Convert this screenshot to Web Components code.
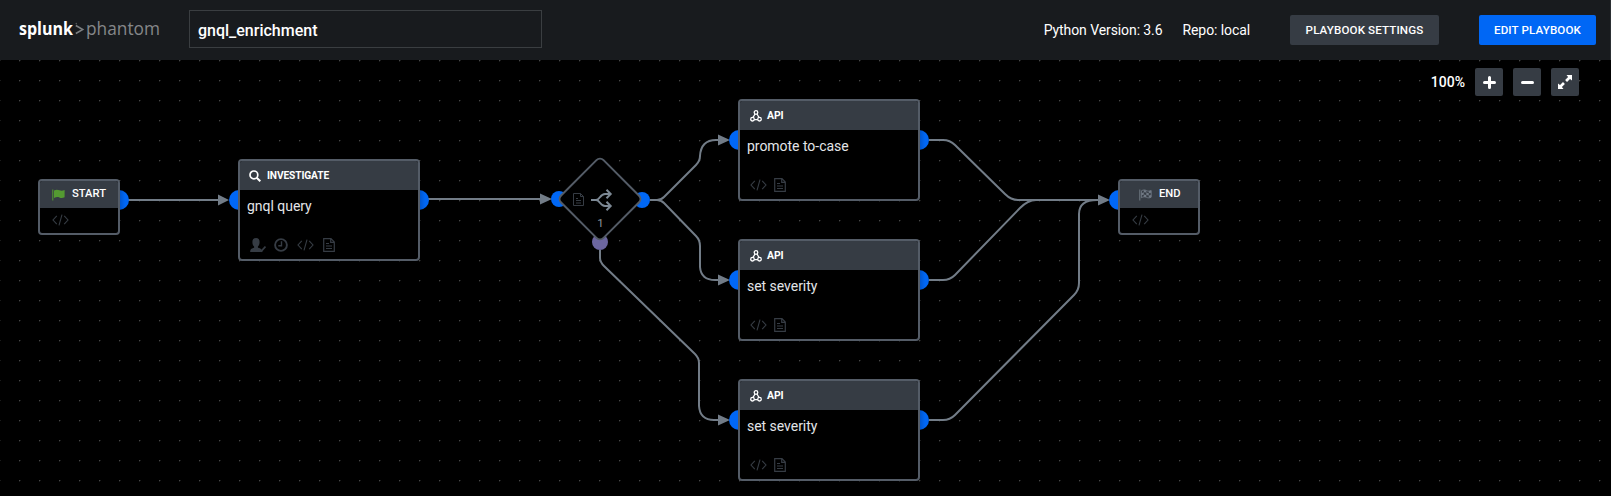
<!DOCTYPE html>
<html lang="en"><head><meta charset="utf-8"><title>gnql_enrichment</title>
<style>html,body{margin:0;background:#000}</style></head><body>
<playbook-app></playbook-app>
<script>
const define=(name,html)=>customElements.define(name,class extends HTMLElement{
  constructor(){super();const t=document.createElement('template');
    t.innerHTML=typeof html==='function'?html(this):html;
    this.attachShadow({mode:'open'}).append(t.content.cloneNode(true));}
});
const ICONS={
 code:['17','12','<path d="M4.8 1.800 1 6l3.800 4.200M12.200 1.800 16 6l-3.800 4.200M10 .6 7 11.400" fill="none" stroke="currentColor" stroke-width="1.100"/>'],
 doc:['12','14','<path d="M.7.7h7.300l3.300 3.300v9.300H.7zM7.700.7v3.600h3.600M3 5.500h3M3 8h6M3 10.500h6" fill="none" stroke="currentColor" stroke-width="1.200"/>'],
 clock:['14','14','<circle cx="7" cy="7" r="5.900" fill="none" stroke="currentColor" stroke-width="1.900"/><path d="M7.500 3.300v4.400H4.300" fill="none" stroke="currentColor" stroke-width="1.400"/>'],
 user:['16','15','<path d="M6 0c2.400 0 3.600 1.600 3.600 4 0 2-.7 3.600-1.700 4.400v1.200l1.300.6L11 12.500 13 14H.2c0-2.600.8-3.400 3.900-4.300V8.400C3 7.600 2.400 6 2.400 4 2.400 1.600 3.600 0 6 0z" fill="currentColor"/><path d="m9.200 10.500 2.300 2.400 4-4.400" fill="none" stroke="currentColor" stroke-width="1.700"/>'],
 search:['12','12','<circle cx="4.900" cy="4.900" r="3.900" fill="none" stroke="currentColor" stroke-width="1.700"/><path d="m7.700 7.700 3.600 3.600" stroke="currentColor" stroke-width="2"/>'],
 api:['12','12','<g fill="none" stroke="currentColor" stroke-width="1.300"><circle cx="6" cy="2.500" r="1.800"/><circle cx="2.500" cy="9.200" r="1.800"/><circle cx="9.500" cy="9.200" r="1.800"/><path d="M5 4 3 7.500M7 4l2 3.500M4.300 9.700h3.400"/></g>'],
 flag:['13','12','<path d="M.8.500v11" stroke="currentColor" stroke-width="1"/><path d="M2 1.500c2.200-1.200 3.800-1 5.400-.2C9 2 10.700 1.900 12.600 1v7.300c-1.900 1-3.700 1-5.200.2C5.800 7.700 4.200 7.900 2 9.100z" fill="currentColor"/>'],
 checker:['13','12','<path d="M.8.500v11" stroke="currentColor" stroke-width="1"/><path d="M2.400 1.800c2-1.100 3.600-1 5-.2 1.500.7 3 .7 4.800-.1v6.700c-1.800.9-3.300.8-4.800.1-1.400-.8-3-.7-5 .4z" fill="none" stroke="currentColor" stroke-width=".9"/><path d="M2.400 4.200 4.800 3.300v2.300l-2.400.9zM4.800 1l2.500.4v2.200l-2.500-.3zM4.800 5.600l2.500.4v2.300l-2.500-.2zM7.300 3.600l2.500.6v2.300L7.300 6zM9.800 2l2.300-.3v2.100l-2.300.4zM9.800 6.400l2.300-.5v2.400l-2.300.4z" fill="currentColor"/>'],
 plus:['13','13','<path d="M6.500 1.500v10M1.500 6.500h10" stroke="currentColor" stroke-width="3" stroke-linecap="round"/>'],
 minus:['13','13','<path d="M1.500 6.500h10" stroke="currentColor" stroke-width="3" stroke-linecap="round"/>'],
 expand:['14','14','<path d="M8.500 0H14v5.500l-2-1.600-3 3L7.100 5l3-3zM5.500 14H0V8.500l2 1.600 3-3L6.900 9l-3 3z" fill="currentColor"/>']
};
define('ui-icon',el=>{const [w,h,p]=ICONS[el.getAttribute('name')];
 return `<style>:host{display:block;flex:none}svg{display:block}</style><svg width="${w}" height="${h}" viewBox="0 0 ${w} ${h}">${p}</svg>`});
define('ui-button',`<style>:host{display:flex;align-items:center;justify-content:center;box-sizing:border-box;height:30px;border-radius:2px;background:#363c44;color:#fff;font:500 11.600px Roboto,sans-serif;letter-spacing:.12px;white-space:nowrap}</style><slot></slot>`);
define('brand-logo',`<style>:host{display:block}svg{display:block;overflow:visible}text{font-family:"Open Sans",sans-serif}</style>
<svg width="142" height="30"><text x="0" y="20" font-size="17.500" font-weight="700" fill="#fff" textLength="54" lengthAdjust="spacingAndGlyphs">splunk</text><path d="M56.800 10.500l7 4-7 4" fill="none" stroke="#7b7e80" stroke-width="1.500"/><circle cx="57.300" cy="8.600" r=".8" fill="#55585a"/><text x="67" y="20" font-size="18" font-weight="400" fill="#858789" textLength="74" lengthAdjust="spacingAndGlyphs">phantom</text></svg>`);
define('app-header',`<style>:host{display:flex;align-items:center;height:60px;box-sizing:border-box;background:#181b1e;padding:0 14px 0 19px;border-right:1px solid #2b2f33;color:#fff;font:400 14px Roboto,sans-serif}
brand-logo{width:170px}.name{box-sizing:border-box;width:353px;height:38px;margin-bottom:2px;border:1px solid #3a3e41;padding:2px 8px 0;display:flex;align-items:center;font-weight:500;font-size:16px}
.meta{display:flex;gap:20px;margin-left:auto;white-space:nowrap;letter-spacing:-.09px}.set{width:149px;margin-left:40px}.edit{width:117px;margin-left:40px;background:#0067f5}</style>
<brand-logo></brand-logo><div class="name">gnql_enrichment</div><div class="meta"><span>Python Version: 3.6</span><span>Repo: local</span></div><ui-button class="set">PLAYBOOK SETTINGS</ui-button><ui-button class="edit">EDIT PLAYBOOK</ui-button>`);
define('zoom-bar',`<style>:host{display:flex;align-items:center;gap:10px;color:#fff;font:500 14px Roboto,sans-serif}ui-button{width:28px;height:28px}</style><span>100%</span><ui-button><ui-icon name="plus"></ui-icon></ui-button><ui-button><ui-icon name="minus"></ui-icon></ui-button><ui-button><ui-icon name="expand"></ui-icon></ui-button>`);
define('flow-block',el=>{const k=el.getAttribute('kind')||'',t=el.getAttribute('icon');return `<style>:host{display:block;width:182px;height:102px;color:#fff;font-family:Roboto,sans-serif}
.box{box-sizing:border-box;height:100%;border:2px solid #545c67;border-radius:4px;background:#000;display:flex;flex-direction:column;overflow:hidden}
.head{display:flex;align-items:center;gap:6px;height:29px;padding:0 9px;background:#363c44;font-size:10.200px;letter-spacing:-.12px;font-weight:700}
.api .head{padding-left:10px;gap:5px;font-size:10.500px}
.title{font-size:14px;line-height:18px;letter-spacing:-.03px;color:#e3e5e8;padding:7px 7px 1px;flex:1}
.tools{display:flex;align-items:center;gap:8px;padding:0 10px 7px;color:#363c44;height:14px}
ui-icon[name=doc]{margin-left:-1px}ui-icon[name=clock]~ui-icon{margin-left:1px}
:host([kind=small]){width:82px;height:56px}.box.small .head{box-sizing:border-box;height:27px;padding:0 0 3px 12px;gap:7px;font-size:11.200px;letter-spacing:0;font-weight:500}.box.small .head ui-icon{color:#549a31;padding-top:3px}
.box.checker .head{padding-left:19px}.box.checker .head ui-icon{color:#707984}.box.small .title{display:none}.box.small .tools{padding:5px 12px 0}</style>
<div class="box ${k} ${t}"><div class="head"><ui-icon name="${t}"></ui-icon><span>${el.getAttribute('label')}</span></div><div class="title"><slot></slot></div><div class="tools">${el.getAttribute('tools').split(' ').map(n=>`<ui-icon name="${n}"></ui-icon>`).join('')}</div></div>`});
define('flow-canvas',`<style>:host{display:block;position:relative;height:436px;overflow:hidden;background:#000}
flow-block,zoom-bar,.wires{position:absolute}.wires{left:0;top:0;font-family:Roboto,sans-serif}zoom-bar{top:8px;right:32px}</style>
<svg class="wires" width="1611" height="436" viewBox="0 60 1611 436">
<defs><pattern id="dots" width="20" height="20" patternUnits="userSpaceOnUse"><path d="M19 0h1v1h-1z" fill="#484848"/><path d="M19 1h1v1h-1zM0 0h1v1H0z" fill="#1b1b1b"/></pattern><linearGradient id="shade" gradientUnits="objectBoundingBox"><stop offset=".5" stop-color="#0052c4"/><stop offset=".8" stop-color="#0067f5"/></linearGradient></defs>
<rect y="60" width="1611" height="436" fill="url(#dots)"/>
<g fill="none" stroke="#727c87" stroke-width="2">
<path d="M128 200H220M428 199H542M650 200h7q4 0 7-3l32-32q4-4 4-9 1-16 16-16h6M657 200q4 0 7 3l32 33q4 4 4 10v21q1 13 15 13h7M600 250v8q0 4 4 8l91 88q4 4 4 9v43q1 14 15 14h8M929 140h14q7 0 12 5l50 49q6 6 13 6h80M929 280h14q7 0 12-5l65-67q8-8 16-8h62M929 420h14q7 0 12-5l119-120q5-5 5-12v-69q0-14 18-14"/></g>
<g fill="#727c87"><path d="M218 194.500v11l11-5.500zM540 193.500v11l12-5.500zM718 134.500v11l12-5.500zM718 274.500v11l12-5.500zM718 414.500v11l12-5.500zM1098 194.500v11l12-5.500z"/></g>
<g fill="#0067f5"><circle cx="239" cy="200" r="10"/><circle cx="739" cy="140" r="10"/><circle cx="739" cy="280" r="10"/><circle cx="739" cy="420" r="10"/><circle cx="1119" cy="200" r="10"/><circle cx="559" cy="199" r="8"/><circle cx="642" cy="200" r="8"/></g>
<g fill="url(#shade)"><circle cx="119" cy="200" r="10"/><circle cx="419" cy="200" r="10"/><circle cx="919" cy="140" r="10"/><circle cx="919" cy="280" r="10"/><circle cx="919" cy="420" r="10"/></g>
<circle cx="600" cy="242" r="8" fill="#6c66a0"/>
<rect x="570" y="169" width="60" height="60" rx="5" transform="rotate(45 600 199)" fill="#000" stroke="#545c67" stroke-width="2"/>
<g transform="translate(573 193)" fill="none" stroke="#363c44" stroke-width="1"><path d="M.5.500h7l3 3v9h-10zM7.500.500v3h3M3 5.500h2M3 7.500h5M3 10h5"/></g>
<g transform="translate(591 189)" fill="none" stroke="#7d8995" stroke-width="2"><path d="M0 11h5c4 0 4-6 9-6h6M5 11c4 0 4 6 9 6h6M15.500 .8l4.200 4.200-4.200 4.200M15.500 12.800l4.200 4.200-4.200 4.200"/></g>
<text x="600.500" y="227" text-anchor="middle" font-size="11.500" fill="#8d969f">1</text>
</svg>
<flow-block kind="small" icon="flag" label="START" tools="code" style="left:38px;top:119px"></flow-block>
<flow-block icon="search" label="INVESTIGATE" tools="user clock code doc" style="left:238px;top:99px">gnql query</flow-block>
<flow-block icon="api" label="API" tools="code doc" style="left:738px;top:39px">promote to-case</flow-block>
<flow-block icon="api" label="API" tools="code doc" style="left:738px;top:179px">set severity</flow-block>
<flow-block icon="api" label="API" tools="code doc" style="left:738px;top:319px">set severity</flow-block>
<flow-block kind="small" icon="checker" label="END" tools="code" style="left:1118px;top:119px"></flow-block>
<zoom-bar></zoom-bar>`);
define('playbook-app',`<style>:host{display:flex;flex-direction:column;width:100%;height:496px;background:#000}</style><app-header></app-header><flow-canvas></flow-canvas>`);
</script></body></html>
